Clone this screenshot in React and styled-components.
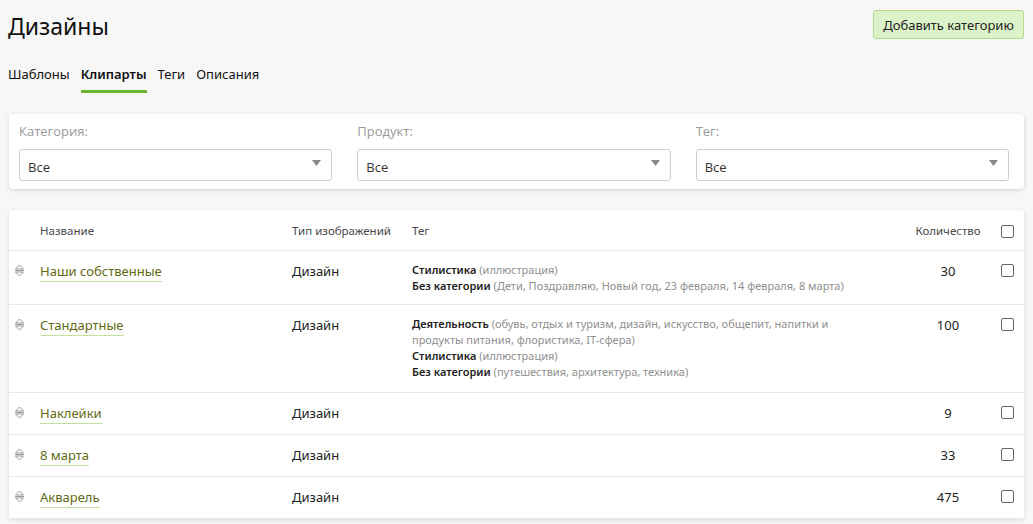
import React from "react";
import styled, { createGlobalStyle } from "styled-components";

const GlobalStyle = createGlobalStyle`
  html, body {
    margin: 0;
    padding: 0;
    background: #f7f7f7;
    font-family: "Noto Sans", "Open Sans", sans-serif;
    color: #222;
  }
`;

const rows = [
  {
    name: "Наши собственные",
    type: "Дизайн",
    tags: [
      { title: "Стилистика", items: "(иллюстрация)" },
      { title: "Без категории", items: "(Дети, Поздравляю, Новый год, 23 февраля, 14 февраля, 8 марта)" },
    ],
    count: 30,
    height: 54,
  },
  {
    name: "Стандартные",
    type: "Дизайн",
    tags: [
      { title: "Деятельность", items: "(обувь, отдых и туризм, дизайн, искусство, общепит, напитки и продукты питания, флористика, IT-сфера)" },
      { title: "Стилистика", items: "(иллюстрация)" },
      { title: "Без категории", items: "(путешествия, архитектура, техника)" },
    ],
    count: 100,
    height: 88,
  },
  { name: "Наклейки", type: "Дизайн", tags: [], count: 9, height: 42 },
  { name: "8 марта", type: "Дизайн", tags: [], count: 33, height: 42 },
  { name: "Акварель", type: "Дизайн", tags: [], count: 475, height: 42 },
];

const filters = ["Категория:", "Продукт:", "Тег:"];

const DragIcon = () => (
  <svg width="11" height="13" viewBox="0 0 11 13" fill="none" stroke="#9a9a9a" strokeWidth="1">
    <path d="M5.5 1 L9.5 5 H1.5 Z" />
    <path d="M1 6.5 H10" />
    <path d="M5.5 12 L9.5 8 H1.5 Z" />
  </svg>
);

const Caret = () => (
  <svg width="9" height="6" viewBox="0 0 9 6">
    <path d="M0 0 H9 L4.5 6 Z" fill="#888" />
  </svg>
);

const App = () => {
  return (
    <Page>
      <GlobalStyle />
      <Header>
        <Title>Дизайны</Title>
        <AddButton>Добавить категорию</AddButton>
      </Header>

      <Tabs>
        <Tab>Шаблоны</Tab>
        <Tab active>Клипарты</Tab>
        <Tab>Теги</Tab>
        <Tab>Описания</Tab>
      </Tabs>

      <FilterCard>
        {filters.map((f) => (
          <Filter key={f}>
            <FilterLabel>{f}</FilterLabel>
            <Select>
              <span>Все</span>
              <Caret />
            </Select>
          </Filter>
        ))}
      </FilterCard>

      <TableCard>
        <HeadRow>
          <Cell />
          <HeadCell>Название</HeadCell>
          <HeadCell>Тип изображений</HeadCell>
          <HeadCell>Тег</HeadCell>
          <HeadCell align="center">Количество</HeadCell>
          <CheckCell><Check /></CheckCell>
        </HeadRow>
        {rows.map((r) => (
          <Row key={r.name} h={r.height}>
            <IconCell><DragIcon /></IconCell>
            <Cell><NameLink>{r.name}</NameLink></Cell>
            <Cell>{r.type}</Cell>
            <TagCell>
              {r.tags.map((t) => (
                <TagLine key={t.title}>
                  <b>{t.title}</b> <span>{t.items}</span>
                </TagLine>
              ))}
            </TagCell>
            <Cell align="center">{r.count}</Cell>
            <CheckCell><Check /></CheckCell>
          </Row>
        ))}
      </TableCard>
    </Page>
  );
};

const Page = styled.div`
  padding: 10px 9px 0 9px;
  height: 514px;
  overflow: hidden;
`;

const Header = styled.div`
  display: flex;
  justify-content: space-between;
  align-items: flex-start;
`;

const Title = styled.h1`
  margin: 1px 0 0 -1px;
  font-weight: 400;
  font-size: 23px;
  line-height: 30px;
  color: #111;
`;

const AddButton = styled.button`
  height: 29px;
  width: 151px;
  padding: 0;
  background: #dcf2c8;
  border: 1px solid #b4d98e;
  border-radius: 3px;
  font-family: "Noto Sans", sans-serif;
  font-size: 13px;
  color: #222;
`;

const Tabs = styled.div`
  display: flex;
  gap: 11px;
  margin-top: 23px;
  margin-left: -1px;
`;

const Tab = styled.div`
  font-size: 13px;
  line-height: 20px;
  padding-bottom: 6px;
  color: #111;
  font-weight: ${(p) => (p.active ? 600 : 400)};
  border-bottom: 3px solid ${(p) => (p.active ? "#6ab72f" : "transparent")};
`;

const FilterCard = styled.div`
  margin-top: 21px;
  background: #fff;
  border-radius: 4px;
  box-shadow: 0 1px 4px rgba(0, 0, 0, 0.15);
  padding: 8px 15px 8px 10px;
  display: grid;
  grid-template-columns: 1fr 1fr 1fr;
  column-gap: 25px;
`;

const Filter = styled.div`
  display: flex;
  flex-direction: column;
`;

const FilterLabel = styled.div`
  font-family: "Open Sans", sans-serif;
  font-size: 13px;
  color: #9a9a9a;
  line-height: 18px;
  margin-bottom: 9px;
`;

const Select = styled.div`
  height: 32px;
  box-sizing: border-box;
  border: 1px solid #cfcfcf;
  border-radius: 3px;
  display: flex;
  align-items: center;
  justify-content: space-between;
  padding: 3px 10px 0 8px;
  font-family: "Open Sans", sans-serif;
  font-size: 13px;
  color: #333;
  svg {
    margin-top: -7px;
  }
`;

const TableCard = styled.div`
  margin-top: 21px;
  background: #fff;
  border-radius: 4px 4px 0 0;
  box-shadow: 0 1px 4px rgba(0, 0, 0, 0.12);
`;

const cols = "31px 252px 120px 1fr 80px 34px";

const HeadRow = styled.div`
  display: grid;
  grid-template-columns: ${cols};
  height: 41px;
  box-sizing: border-box;
  align-items: center;
  border-bottom: 1px solid #e8e8e8;
`;

const Row = styled.div`
  display: grid;
  grid-template-columns: ${cols};
  align-items: start;
  padding-top: 10px;
  box-sizing: border-box;
  height: ${(p) => p.h}px;
  border-bottom: 1px solid #e8e8e8;
`;

const Cell = styled.div`
  font-size: 13px;
  line-height: 20px;
  color: #222;
  text-align: ${(p) => p.align || "left"};
  padding-right: ${(p) => (p.align === "center" ? "4px" : "0")};
`;

const HeadCell = styled.div`
  font-size: 11.5px;
  font-weight: 400;
  color: #4a4a4a;
  text-align: ${(p) => p.align || "left"};
  padding-right: ${(p) => (p.align === "center" ? "4px" : "0")};
`;

const IconCell = styled.div`
  display: flex;
  padding-left: 5px;
  padding-top: 3px;
`;

const NameLink = styled.span`
  color: #5f6a14;
  border-bottom: 1px solid #c3e39c;
  padding-bottom: 1px;
`;

const TagCell = styled.div`
  font-size: 11px;
  padding-right: 40px;
  padding-top: 1px;
  b {
    font-weight: 600;
    color: #222;
  }
  span {
    color: #8f8f8f;
  }
`;

const TagLine = styled.div`
  line-height: 16px;
`;

const CheckCell = styled.div`
  display: flex;
  justify-content: center;
  padding-top: 3px;
`;

const Check = styled.span`
  display: block;
  width: 11px;
  height: 11px;
  border: 1px solid #666;
  border-radius: 2px;
`;

export default App;
